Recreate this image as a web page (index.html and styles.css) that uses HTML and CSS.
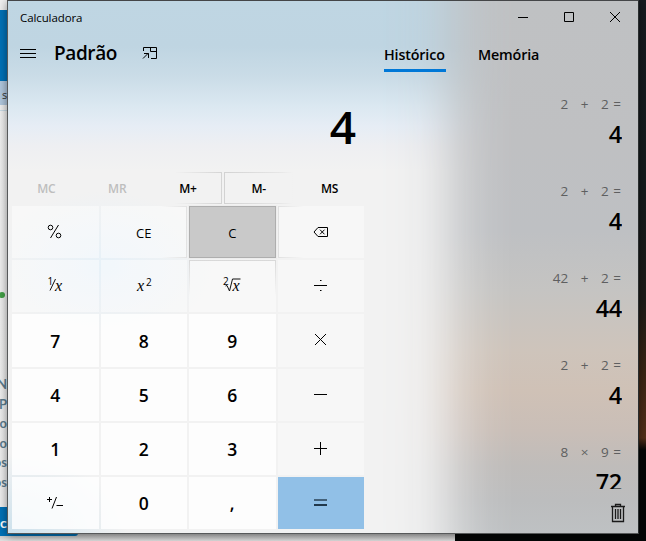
FILE: index.html
```html
<!DOCTYPE html>
<html lang="pt-BR">
<head>
<meta charset="utf-8">
<title>Calculadora</title>
<link rel="stylesheet" href="styles.css">
</head>
<body>
<div class="desktop">
  <div class="site">
    <div class="site-bar"></div>
    <div class="site-tab">s</div>
    <div class="site-rule"></div>
    <div class="site-dot"></div>
    <div class="site-list"><span>N</span><span>P</span><span>o</span><span>o</span><span>os</span><span>os</span></div>
    <div class="site-button">c</div>
  </div>

  <main class="window">
    <header class="titlebar">
      <span class="app-name">Calculadora</span>
      <div class="controls">
        <svg width="46" height="32" class="line"><path d="M18 16.500h10"/></svg>
        <svg width="46" height="32" class="line"><path d="M18.500 11.500h9v9h-9z"/></svg>
        <svg width="46" height="32" class="line"><path d="M18 11l10 10M28 11l-10 10"/></svg>
      </div>
    </header>
    <div class="body">
      <section class="calc">
        <div class="mode">
          <svg width="16" height="10" class="line menu"><path d="M0 .5h16M0 4.500h16M0 8.500h16"/></svg>
          <h1>Padrão</h1>
          <svg width="16" height="14" class="line"><path d="M1.500 5V1.500h13v11H9M8.500 1.500v4h6M1 12.500l5.500-5.500M2 7.500h4.500V12"/></svg>
        </div>
        <div class="display">4</div>
        <div class="memory">
          <span class="off">MC</span><span class="off">MR</span><span class="near-left">M+</span><span class="near">M-</span><span>MS</span>
        </div>
        <div class="keypad">
          <div class="key fn"><svg width="20" height="20" class="line"><circle cx="5.500" cy="5.500" r="2.300"/><circle cx="13.500" cy="13.500" r="2.300"/><path d="M13.500 3L5.500 16"/></svg></div>
          <div class="key fn lit-right"><span>CE</span></div>
          <div class="key hover"><span>C</span></div>
          <div class="key op lit-left"><svg width="16" height="12" class="line"><path d="M5 1.500h9.500v9H5L1 6zM7 3.700l4.500 4.600M11.500 3.700L7 8.300"/></svg></div>
          <div class="key fn"><svg width="22" height="20"><text x="3.500" y="9" class="tiny">1</text><path d="M11.500 3L6 14.500" class="stroke"/><text x="11" y="14.500" class="var">x</text></svg></div>
          <div class="key fn"><svg width="22" height="20"><text x="4" y="14.500" class="var">x</text><text x="13" y="9.500" class="tiny">2</text></svg></div>
          <div class="key fn lit-top"><svg width="22" height="20"><text x="2" y="9" class="tiny">2</text><path d="M4.500 10l1.500-.5 2.500 5.500 3-12h8" class="stroke"/><text x="11.500" y="14.500" class="var">x</text></svg></div>
          <div class="key op"><svg width="14" height="14" class="line"><path d="M0 6.500h13M6 1.500h1.500M6 11.500h1.500"/></svg></div>
          <div class="key num">7</div><div class="key num">8</div><div class="key num">9</div>
          <div class="key op"><svg width="14" height="14" class="line"><path d="M1 1l11 11M12 1l-11 11"/></svg></div>
          <div class="key num">4</div><div class="key num">5</div><div class="key num">6</div>
          <div class="key op"><svg width="14" height="14" class="line"><path d="M0 6.500h13"/></svg></div>
          <div class="key num">1</div><div class="key num">2</div><div class="key num">3</div>
          <div class="key op"><svg width="14" height="14" class="line"><path d="M0 6.500h13M6.500 0v13"/></svg></div>
          <div class="key num"><svg width="18" height="16" class="line"><path d="M1 4.500h5M3.500 2v5M10.500 2L6 13.500M10.500 10.500H17"/></svg></div>
          <div class="key num">0</div>
          <div class="key num">,</div>
          <div class="key equals"><svg width="14" height="14"><path d="M0 4h13" class="eq-top"/><path d="M0 9h13" class="eq-bottom"/></svg></div>
        </div>
      </section>
      <aside class="side">
        <nav class="tabs"><span class="active">Histórico</span><span>Memória</span></nav>
        <div class="history">
          <div class="entry"><div class="expr"><span>2</span><span>+</span><span>2 =</span></div><div class="result">4</div></div>
          <div class="entry"><div class="expr"><span>2</span><span>+</span><span>2 =</span></div><div class="result">4</div></div>
          <div class="entry"><div class="expr"><span>42</span><span>+</span><span>2 =</span></div><div class="result">44</div></div>
          <div class="entry"><div class="expr"><span>2</span><span>+</span><span>2 =</span></div><div class="result">4</div></div>
          <div class="entry"><div class="expr"><span>8</span><span>×</span><span>9 =</span></div><div class="result">72</div></div>
        </div>
        <div class="clear"><svg width="16" height="20" class="trash"><path d="M1 3.500h14M5.500 3V1.500h5V3M2.500 4v14.500h11V4M5.500 6v10M8 6v10M10.500 6v10"/></svg></div>
      </aside>
    </div>
  </main>
</div>
</body>
</html>
```
FILE: styles.css
```css
* { box-sizing: border-box; }
body { margin: 0; font-family: "Open Sans", "Noto Sans", sans-serif; color: #000; }
.desktop {
  position: relative; width: 646px; height: 541px; overflow: hidden;
  background: linear-gradient(#171b20 0, #151a1c 190px, #1d1b18 300px, #3a2414 370px, #54301a 438px, #050606 450px, #040606 100%);
}
svg { display: block; }
.line { fill: none; stroke: #000; stroke-width: 1; }

/* browser page behind the window */
.site { position: absolute; left: 0; top: 0; width: 455px; height: 541px; background: linear-gradient(#f0f0f0, #eee 533px, #c4c4c4 534px, #e2e2e2); overflow: hidden; }
.site-bar { margin-top: 10px; height: 71px; background: #0072b8; }
.site-tab { height: 24px; background: #b1c8de; font-size: 11px; line-height: 27px; padding-left: 2px; color: #333; }
.site-rule { margin-top: 5px; height: 1px; background: #c9dbe6; }
.site-dot { width: 6px; height: 6px; margin: 181px 0 0 -1px; border-radius: 50%; background: #43a047; }
.site-list { margin-top: 77px; width: 7px; display: flex; flex-direction: column; align-items: flex-end; font: 700 13px/19.500px Lato, sans-serif; color: #5d7d8e; }
.site-button { margin-top: 15px; width: 78px; height: 29px; border-radius: 0 0 3px 0; background: #0072b8; color: #fff; font: 700 14px/32px Lato, sans-serif; }

.window {
  position: absolute; left: 7px; top: 0; width: 632px; height: 534px;
  display: flex; flex-direction: column; border: 1px solid #57595a; border-top-color: #444648; border-right-color: #292d2e;
  background:
    radial-gradient(ellipse 110px 75px at 95px 265px, #e7f1f8 0, #e7f1f800 100%),
    radial-gradient(ellipse 120px 80px at 0 532px, #cde1ec 0, #cde1ec00 100%),
    linear-gradient(#bfd6e3 0, #bfd5e2 45px, #cadce7 75px, #dbe8f1 105px, #e6edf5 125px, #eeeff2 145px, #f2f2f2 170px, #f2f2f2 100%);
  box-shadow: 0 2px 9px #0007;
}
/* dark wallpaper showing through the acrylic on the right */
.window::after {
  content: ""; position: absolute; inset: 0; z-index: 0;
  background: linear-gradient(#bfc1c3 0, #bfc0c2 140px, #bec0c3 230px, #c5c4c2 290px, #cec4bb 350px, #cfc1b6 390px, #c9beb7 430px, #bfbcba 465px, #bcbdbe 500px, #bec1c3 532px);
  -webkit-mask-image: linear-gradient(90deg, transparent 370px, #00000008 395px, #0000001a 412px, #0000003c 425px, #0000006c 438px, #000000a4 452px, #000000d4 468px, #000000f2 485px, #000 505px);
  mask-image: linear-gradient(90deg, transparent 370px, #00000008 395px, #0000001a 412px, #0000003c 425px, #0000006c 438px, #000000a4 452px, #000000d4 468px, #000000f2 485px, #000 505px);
}
.titlebar, .body { position: relative; z-index: 1; }
.titlebar { display: flex; justify-content: space-between; height: 32px; flex: none; }
.app-name { padding-left: 12px; font-size: 11.500px; line-height: 33px; letter-spacing: -.1px; }
.controls { display: flex; }
.body { display: flex; flex: 1; min-height: 0; }

.calc { width: 356px; flex: none; }
.mode { display: flex; align-items: center; height: 40px; padding-left: 12px; }
.menu { margin-top: 2px; }
.mode h1 { margin: 0 25px 0 18px; width: 63px; font-size: 19px; line-height: 40px; font-weight: 600; letter-spacing: -.4px; }
.display { height: 98px; padding-right: 8px; text-align: right; font-size: 46px; line-height: 106px; font-weight: 600; }
.memory { display: flex; height: 33px; margin-left: 4px; gap: 2px; padding-top: 1px; }
.memory span { flex: 1; text-align: center; font-size: 12px; line-height: 32px; font-weight: 600; letter-spacing: -.2px; border: 1px solid transparent; }
.memory .off { color: #bebebe; }
.memory .near-left { border-image: linear-gradient(90deg, transparent 30%, #d4d4d4) 1; }
.memory .near { border-image: linear-gradient(90deg, #d2d2d2, #e6e6e6 80%, transparent) 1; }

.keypad { display: grid; grid-template-columns: repeat(4, 1fr); grid-template-rows: repeat(6, 1fr); gap: 2px; height: 323px; margin: 2px 0 0 4px; }
.key { display: flex; align-items: center; justify-content: center; font-size: 13px; background: #ffffff75; }
.key span { padding-top: 2px; }
.op { background: #ffffff60; }
.num { background: #ffffffd0; font-size: 17.500px; font-weight: 600; padding-top: 1px; }
.hover { background: #c9c9c9; border: 1px solid #aeaeae; box-shadow: 0 0 0 1px #ededed; }
.lit-right, .lit-left, .lit-top { border: 1px solid transparent; }
.lit-right { border-image: linear-gradient(90deg, transparent 70%, #e2e2e2) 1; }
.lit-left { border-image: linear-gradient(270deg, transparent 70%, #e0e0e0) 1; }
.lit-top { border-image: linear-gradient(#d8d8d8, transparent 70%) 1; }
.equals { background: #91c0e7; }
.eq-top { stroke: #43617a; stroke-width: 2; }
.eq-bottom { stroke: #21384b; stroke-width: 2; }
.tiny { font: 10px "Open Sans", sans-serif; }
.var { font: italic 16px "Liberation Serif", serif; }
.stroke { fill: none; stroke: #111; stroke-width: 1; }

.side { flex: 1; display: flex; flex-direction: column; padding-right: 16px; min-width: 0; }
.tabs { display: flex; gap: 32px; padding: 7px 0 0 20px; height: 40px; font-size: 14.300px; font-weight: 600; line-height: 29px; letter-spacing: -.15px; }
.tabs span { height: 32px; white-space: nowrap; width: 62px; }
.tabs .active { border-bottom: 3px solid #0078d7; }
.history { height: 416px; padding-top: 19px; overflow: hidden; }
.entry { height: 87px; text-align: right; }
.expr { display: flex; justify-content: flex-end; gap: 12.500px; padding-right: 1px; font-size: 13.500px; line-height: 24px; color: #5e5f60; word-spacing: 1px; }
.result { font-size: 23.500px; font-weight: 600; line-height: 36px; letter-spacing: -.3px; }
.clear { display: flex; justify-content: flex-end; padding-top: 14px; margin-right: -4px; }
.trash { fill: none; stroke: #1a1a1a; stroke-width: 1.300; }
```
